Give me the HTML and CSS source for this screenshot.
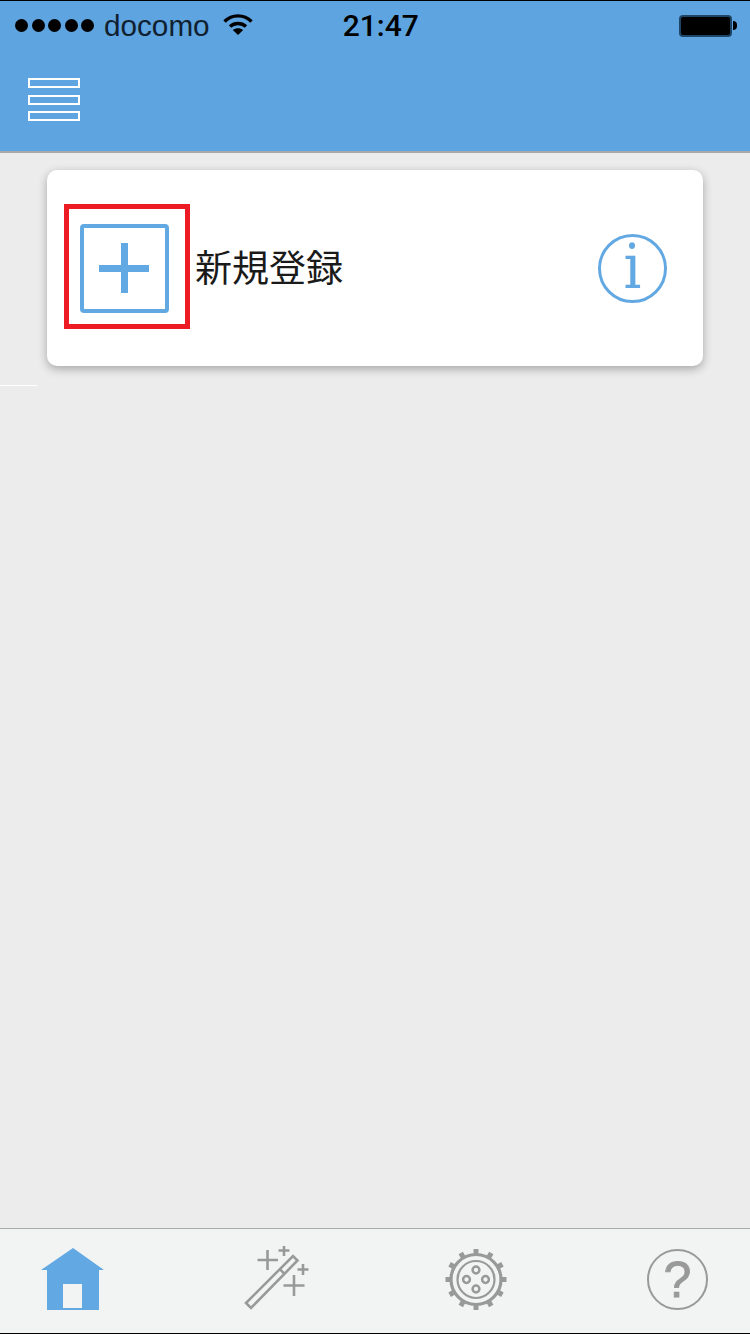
FILE: index.html
```html
<!DOCTYPE html>
<html lang="ja">
<head>
    <meta charset="UTF-8">
    <meta name="viewport" content="width=device-width, initial-scale=1.0">
    <title>新規登録</title>
    <link rel="stylesheet" href="styles.css">
</head>
<body>
    <div class="app">
        <header class="header">
            <div class="status">
                <div class="signal">
                    <span class="dot"></span>
                    <span class="dot"></span>
                    <span class="dot"></span>
                    <span class="dot"></span>
                    <span class="dot"></span>
                </div>
                <span class="carrier">docomo</span>
                <svg class="wifi" width="30" height="22" viewBox="0 0 30 22">
                    <path d="M1.5 8.5 C9 1 21 1 28.5 8.5" fill="none" stroke="#000" stroke-width="3.4"/>
                    <path d="M7 13.5 C11.5 9.5 18.5 9.5 23 13.5" fill="none" stroke="#000" stroke-width="3.4"/>
                    <path d="M9.8 17 C13 14.6 17 14.6 20.2 17 L15 22 Z" fill="#000"/>
                </svg>
                <span class="time">21:47</span>
                <div class="battery">
                    <div class="battery-body"></div>
                    <div class="battery-nub"></div>
                </div>
            </div>
            <div class="navbar">
                <div class="menu">
                    <span class="menu-bar"></span>
                    <span class="menu-bar"></span>
                    <span class="menu-bar"></span>
                </div>
            </div>
        </header>

        <main class="main">
            <div class="card">
                <div class="highlight">
                    <svg class="add-icon" width="89" height="89" viewBox="0 0 89 89">
                        <rect x="2" y="2" width="85" height="85" rx="2" fill="#fff" stroke="#62a8e2" stroke-width="4"/>
                        <rect x="19" y="41" width="50" height="7" fill="#62a8e2"/>
                        <rect x="41" y="19" width="7" height="50" fill="#62a8e2"/>
                    </svg>
                </div>
                <span class="card-label">新規登録</span>
                <div class="info">i</div>
            </div>
            <div class="divider"></div>
        </main>

        <nav class="tabbar">
            <svg class="tab" width="70" height="70" viewBox="0 0 70 70">
                <path d="M35 2 L66 24 L61 24 L61 64 L9 64 L9 24 L3 24 Z" fill="#62a8e2"/>
                <rect x="25" y="38" width="19" height="24" fill="#f2f4f4"/>
            </svg>
            <svg class="tab" width="70" height="70" viewBox="0 0 70 70">
                <g fill="none" stroke="#999" stroke-width="2.6">
                    <path d="M7 57 L54 10 L58.5 14.5 L12 62 Z"/>
                    <path d="M40.8 23.2 L45.8 28.2"/>
                    <path d="M18.5 14 H39 M28.5 4 V24"/>
                    <path d="M39.5 4.5 H50.5 M45 -1 V10"/>
                    <path d="M58.5 23.5 H69.5 M64 18 V29"/>
                    <path d="M44.5 39.5 H65.5 M55 29 V50"/>
                </g>
            </svg>
            <svg class="tab" width="70" height="70" viewBox="0 0 70 70">
                <g fill="#999">
                    <rect x="32.5" y="3" width="5" height="6"/>
                    <rect x="32.5" y="3" width="5" height="6" transform="rotate(30 35 33.5)"/>
                    <rect x="32.5" y="3" width="5" height="6" transform="rotate(60 35 33.5)"/>
                    <rect x="32.5" y="3" width="5" height="6" transform="rotate(90 35 33.5)"/>
                    <rect x="32.5" y="3" width="5" height="6" transform="rotate(120 35 33.5)"/>
                    <rect x="32.5" y="3" width="5" height="6" transform="rotate(150 35 33.5)"/>
                    <rect x="32.5" y="3" width="5" height="6" transform="rotate(180 35 33.5)"/>
                    <rect x="32.5" y="3" width="5" height="6" transform="rotate(210 35 33.5)"/>
                    <rect x="32.5" y="3" width="5" height="6" transform="rotate(240 35 33.5)"/>
                    <rect x="32.5" y="3" width="5" height="6" transform="rotate(270 35 33.5)"/>
                    <rect x="32.5" y="3" width="5" height="6" transform="rotate(300 35 33.5)"/>
                    <rect x="32.5" y="3" width="5" height="6" transform="rotate(330 35 33.5)"/>
                </g>
                <g fill="none" stroke="#999">
                    <circle cx="35" cy="33.5" r="25" stroke-width="3.2"/>
                    <circle cx="35" cy="33.5" r="18.5" stroke-width="2.2"/>
                    <circle cx="35" cy="24" r="3.4" stroke-width="2.5"/>
                    <circle cx="35" cy="43" r="3.4" stroke-width="2.5"/>
                    <circle cx="25.5" cy="33.5" r="3.4" stroke-width="2.5"/>
                    <circle cx="44.5" cy="33.5" r="3.4" stroke-width="2.5"/>
                </g>
            </svg>
            <div class="tab help">?</div>
        </nav>
    </div>
</body>
</html>
```

FILE: styles.css
```css
* {
    box-sizing: border-box;
}
body {
    margin: 0;
    background-color: #ececec;
    font-family: "Liberation Sans", "Noto Sans CJK JP", sans-serif;
}
.app {
    display: flex;
    flex-direction: column;
    height: 1334px;
}

/* header */
.header {
    background-color: #5ea4e0;
    border-top: 1px solid #000;
    border-bottom: 2px solid #a9a9a9;
    height: 153px;
}
.status {
    display: flex;
    align-items: center;
    height: 49px;
    padding: 0 13px 0 15px;
    color: #000;
}
.signal {
    display: flex;
    gap: 3.5px;
}
.dot {
    width: 13px;
    height: 13px;
    border-radius: 50%;
    background-color: #000;
}
.carrier {
    margin-left: 10px;
    font-size: 29.7px;
    color: #10202e;
}
.wifi {
    margin-left: 13px;
    margin-bottom: 3px;
}
.time {
    margin-left: 90px;
    font-family: Roboto, sans-serif;
    font-size: 30px;
    font-weight: 500;
}
.battery {
    display: flex;
    align-items: center;
    margin-left: auto;
}
.battery-body {
    width: 53px;
    height: 22px;
    border: 2px solid #1f4566;
    border-radius: 4px;
    background-color: #000;
}
.battery-nub {
    width: 4px;
    height: 9px;
    margin-left: 1px;
    border-radius: 0 4px 4px 0;
    background-color: #000;
}
.navbar {
    padding: 28px 0 0 28px;
}
.menu {
    display: flex;
    flex-direction: column;
    gap: 6.5px;
    width: 52px;
}
.menu-bar {
    height: 10px;
    border: 2.5px solid #fff;
}

/* card */
.main {
    flex: 1;
    padding-top: 17px;
}
.card {
    display: flex;
    height: 196px;
    margin: 0 47px;
    padding: 34px 36px 0 17px;
    border-radius: 10px;
    background-color: #fff;
    box-shadow: 0 3px 10px rgba(0, 0, 0, 0.3);
}
.highlight {
    width: 126px;
    height: 125px;
    padding: 15px 0 0 11px;
    border: 5px solid #ed1c24;
}
.add-icon {
    display: block;
}
.card-label {
    margin: 43px 0 0 5px;
    font-size: 37px;
    line-height: 46px;
    color: #1a1a1a;
}
.info {
    width: 69px;
    height: 69px;
    margin: 30px 0 0 auto;
    border: 3px solid #62a8e2;
    border-radius: 50%;
    color: #62a8e2;
    font-family: "DejaVu Serif", serif;
    font-size: 62px;
    font-stretch: condensed;
    line-height: 60px;
    text-align: center;
}
.divider {
    width: 37px;
    height: 1px;
    margin-top: 19px;
    background-color: #fff;
}

/* bottom tabs */
.tabbar {
    display: flex;
    align-items: center;
    justify-content: space-between;
    height: 106px;
    padding: 0 38px;
    background-color: #f2f4f4;
    border-top: 1px solid #a9a9a9;
    border-bottom: 1px solid #000;
}
.tab {
    flex: none;
}
.help {
    width: 61px;
    height: 61px;
    margin: 0 4px 3px 5px;
    border: 2.5px solid #999;
    border-radius: 50%;
    color: #999;
    font-size: 50px;
    line-height: 58px;
    text-align: center;
    -webkit-text-stroke: 0.8px #999;
}
```
